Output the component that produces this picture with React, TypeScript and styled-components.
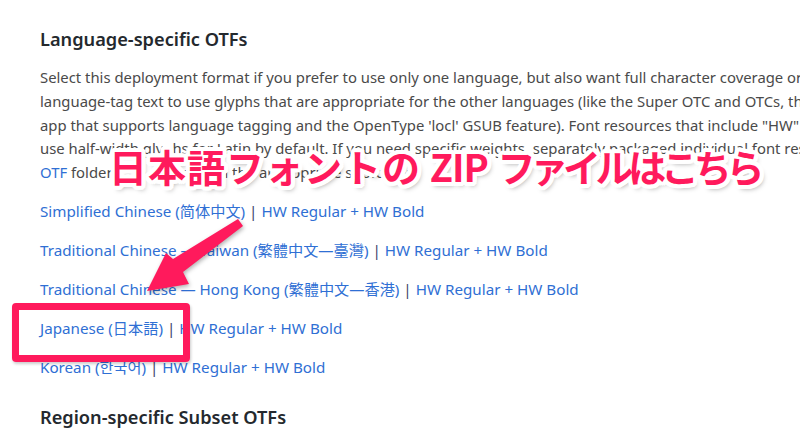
import React from "react";
import styled, { createGlobalStyle } from "styled-components";

const GlobalStyle = createGlobalStyle`
  html, body { margin: 0; padding: 0; background: #ffffff; overflow: hidden; }
`;

const Page = styled.div`
  position: relative;
  width: 1100px;
  height: 435px;
  box-sizing: border-box;
  padding: 27px 0 0 40px;
  font-family: "Noto Sans", "Noto Sans CJK JP", sans-serif;
  font-size: 14.85px;
  color: #4a4a4a;
`;

const Heading = styled.h3<{ $top?: number }>`
  margin: ${(p) => p.$top ?? 0}px 0 15px;
  font-size: 18.2px;
  line-height: 24px;
  font-weight: 600;
  color: #24292e;
`;

const Para = styled.p`
  margin: 0 0 14px;
  line-height: 23.8px;
  white-space: nowrap;
`;

const LinkLine = styled.p`
  margin: 0 0 15px;
  line-height: 24px;
  font-size: 15.2px;
  white-space: nowrap;
`;

const Link = styled.a`
  color: #2f6fd4;
  text-decoration: none;
`;

const Sep = styled.span`
  color: #3d3f6a;
`;

const Callout = styled.div`
  position: absolute;
  left: 109px;
  top: 142px;
  font-family: "Noto Sans CJK JP", sans-serif;
  font-weight: 700;
  font-size: 38px;
  line-height: 48px;
  color: #ff1a5c;
  white-space: nowrap;
  text-shadow:
    4px 0 0 #fff, -4px 0 0 #fff, 0 4px 0 #fff, 0 -4px 0 #fff,
    3px 3px 0 #fff, -3px 3px 0 #fff, 3px -3px 0 #fff, -3px -3px 0 #fff,
    4px 2px 0 #fff, -4px 2px 0 #fff, 4px -2px 0 #fff, -4px -2px 0 #fff,
    2px 4px 0 #fff, -2px 4px 0 #fff, 2px -4px 0 #fff, -2px -4px 0 #fff,
    3px 4px 5px rgba(0, 0, 0, 0.35);
`;

const CalloutPart = styled.span<{ $ls: number }>`
  letter-spacing: ${(p) => p.$ls}px;
`;

const CalloutLatin = styled.span`
  letter-spacing: -1px;
  margin-right: 1px;
`;

const Highlight = styled.div`
  position: absolute;
  left: 12px;
  top: 303px;
  width: 178px;
  height: 59px;
  box-sizing: border-box;
  border: 7px solid #ff1a5c;
  border-radius: 4px;
  box-shadow: 1px 2px 3px rgba(0, 0, 0, 0.2);
`;

const ArrowSvg = styled.svg`
  position: absolute;
  left: 0;
  top: 0;
  overflow: visible;
  filter: drop-shadow(1px 2px 2px rgba(0, 0, 0, 0.3));
`;

export default function App() {
  return (
    <>
      <GlobalStyle />
      <Page>
        <Heading>Language-specific OTFs</Heading>
        <Para>
          Select this deployment format if you prefer to use only one language, but also want full character coverage or the ability to
          <br />
          language-tag text to use glyphs that are appropriate for the other languages (like the Super OTC and OTCs, this requires an
          <br />
          app that supports language tagging and the OpenType 'locl' GSUB feature). Font resources that include "HW" in their names
          <br />
          use half-width glyphs for Latin by default. If you need specific weights, separately packaged individual font resources in the
          <br />
          <Link href="#">OTF</Link> folders are available in the appropriate subfolder.
        </Para>
        <LinkLine>
          <Link href="#">Simplified Chinese (简体中文)</Link> <Sep>|</Sep> <Link href="#">HW Regular + HW Bold</Link>
        </LinkLine>
        <LinkLine>
          <Link href="#">Traditional Chinese — Taiwan (繁體中文—臺灣)</Link> <Sep>|</Sep> <Link href="#">HW Regular + HW Bold</Link>
        </LinkLine>
        <LinkLine>
          <Link href="#">Traditional Chinese — Hong Kong (繁體中文—香港)</Link> <Sep>|</Sep> <Link href="#">HW Regular + HW Bold</Link>
        </LinkLine>
        <LinkLine>
          <Link href="#">Japanese (日本語)</Link> <Sep>|</Sep> <Link href="#">HW Regular + HW Bold</Link>
        </LinkLine>
        <LinkLine>
          <Link href="#">Korean (한국어)</Link> <Sep>|</Sep> <Link href="#">HW Regular + HW Bold</Link>
        </LinkLine>
        <Heading $top={26}>Region-specific Subset OTFs</Heading>

        <Highlight />
        <ArrowSvg width="800" height="435" viewBox="0 0 800 435">
          <polygon
            points="238,219 243,226 183,272 189,284 147,291 166,253 173,259"
            fill="#ff1a5c"
          />
        </ArrowSvg>
        <Callout>
          <CalloutPart $ls={1}>日本語フォントの</CalloutPart>{" "}
          <CalloutLatin>ZIP</CalloutLatin>{" "}
          <CalloutPart $ls={-5.3}>ファイルはこちら</CalloutPart>
        </Callout>
      </Page>
    </>
  );
}
